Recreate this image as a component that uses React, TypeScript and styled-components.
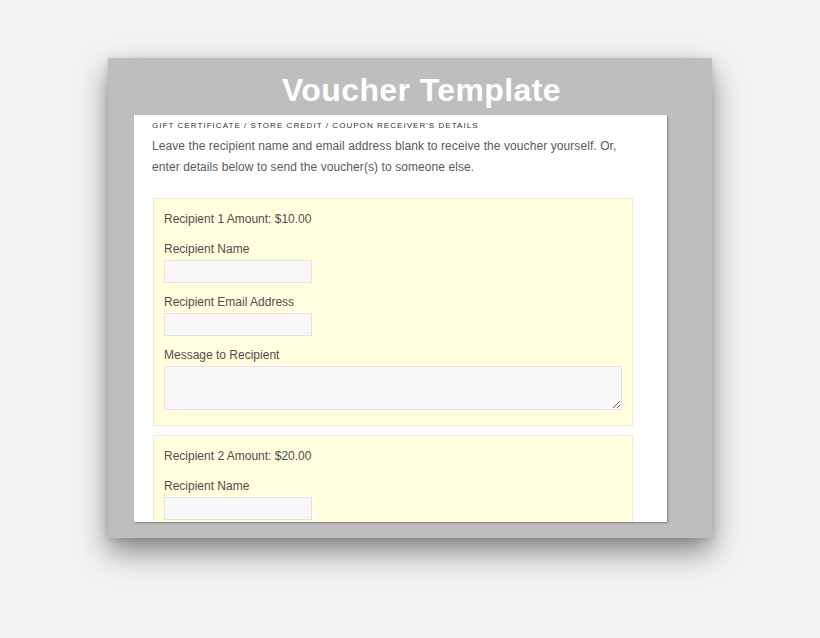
import styled, { createGlobalStyle } from 'styled-components';

const GlobalStyle = createGlobalStyle`
  html, body {
    margin: 0;
    padding: 0;
    background: #f3f3f3;
  }
  body {
    font-family: "Liberation Sans", Arial, sans-serif;
  }
`;

const Page = styled.div`
  width: 820px;
  height: 638px;
  padding-top: 58px;
  box-sizing: border-box;
  display: flex;
  justify-content: center;
  align-items: flex-start;
`;

const Frame = styled.div`
  width: 604px;
  height: 480px;
  box-sizing: border-box;
  background: #bebebe;
  box-shadow: 0 14px 28px rgba(0, 0, 0, 0.45), 0 2px 8px rgba(0, 0, 0, 0.12);
  display: flex;
  flex-direction: column;
  padding: 0 45px 16px 26px;
`;

const Title = styled.h1`
  margin: 0;
  height: 57px;
  box-sizing: border-box;
  display: flex;
  align-items: center;
  justify-content: center;
  padding: 7px 0 0 42px;
  color: #fff;
  font-size: 32px;
  font-weight: bold;
  letter-spacing: 0.4px;
`;

const Sheet = styled.div`
  flex: 1;
  background: #fff;
  overflow: hidden;
  box-shadow: 1px 1px 2px rgba(0, 0, 0, 0.35);
  padding: 5px 34px 0 18px;
`;

const Heading = styled.h2`
  margin: 0;
  font-size: 8px;
  line-height: 12px;
  font-weight: normal;
  letter-spacing: 1.05px;
  text-transform: uppercase;
  color: #333;
`;

const Intro = styled.p`
  margin: 4px 0 20px;
  font-size: 12px;
  line-height: 21px;
  letter-spacing: 0.08px;
  color: #5a5a5a;
`;

const RecipientBox = styled.div`
  width: 480px;
  box-sizing: border-box;
  background: #ffffe0;
  border: 1px solid #eeeccd;
  padding: 11px 10px 15px;
  margin: 0 0 9px 1px;
`;

const Amount = styled.div`
  font-size: 12px;
  line-height: 18px;
  color: #4e4e4e;
  margin-bottom: 12px;
`;

const Field = styled.div`
  margin-bottom: 10px;

  &:last-child {
    margin-bottom: 0;
  }
`;

const Label = styled.label`
  display: block;
  font-size: 12px;
  line-height: 18px;
  color: #4e4e4e;
  margin-bottom: 2px;
`;

const TextInput = styled.input`
  display: block;
  width: 148px;
  height: 23px;
  box-sizing: border-box;
  background: #f8f8f8;
  border: 1px solid #e2e2e2;
  margin: 0;
  outline: none;
`;

const MessageArea = styled.textarea`
  display: block;
  width: 458px;
  height: 44px;
  box-sizing: border-box;
  background: #f8f8f8;
  border: 1px solid #e2e2e2;
  margin: 0;
  outline: none;
  resize: both;
`;

type FieldKind = 'name' | 'email' | 'message';

type Recipient = { amount: string; fields: FieldKind[] };

const recipients: Recipient[] = [
  { amount: '$10.00', fields: ['name', 'email', 'message'] },
  { amount: '$20.00', fields: ['name'] },
];

const renderField = (kind: FieldKind) => {
  switch (kind) {
    case 'name':
      return (
        <Field key={kind}>
          <Label>Recipient Name</Label>
          <TextInput type='text' />
        </Field>
      );
    case 'email':
      return (
        <Field key={kind}>
          <Label>Recipient Email Address</Label>
          <TextInput type='email' />
        </Field>
      );
    default:
      return (
        <Field key={kind}>
          <Label>Message to Recipient</Label>
          <MessageArea />
        </Field>
      );
  }
};

const App = () => {
  return (
    <>
      <GlobalStyle />
      <Page>
        <Frame>
          <Title>Voucher Template</Title>
          <Sheet>
            <Heading>Gift Certificate / Store Credit / Coupon Receiver's Details</Heading>
            <Intro>
              Leave the recipient name and email address blank to receive the voucher yourself. Or,
              enter details below to send the voucher(s) to someone else.
            </Intro>
            {recipients.map((r, i) => (
              <RecipientBox key={i}>
                <Amount>
                  Recipient {i + 1} Amount: {r.amount}
                </Amount>
                {r.fields.map(renderField)}
              </RecipientBox>
            ))}
          </Sheet>
        </Frame>
      </Page>
    </>
  );
};

export default App;
